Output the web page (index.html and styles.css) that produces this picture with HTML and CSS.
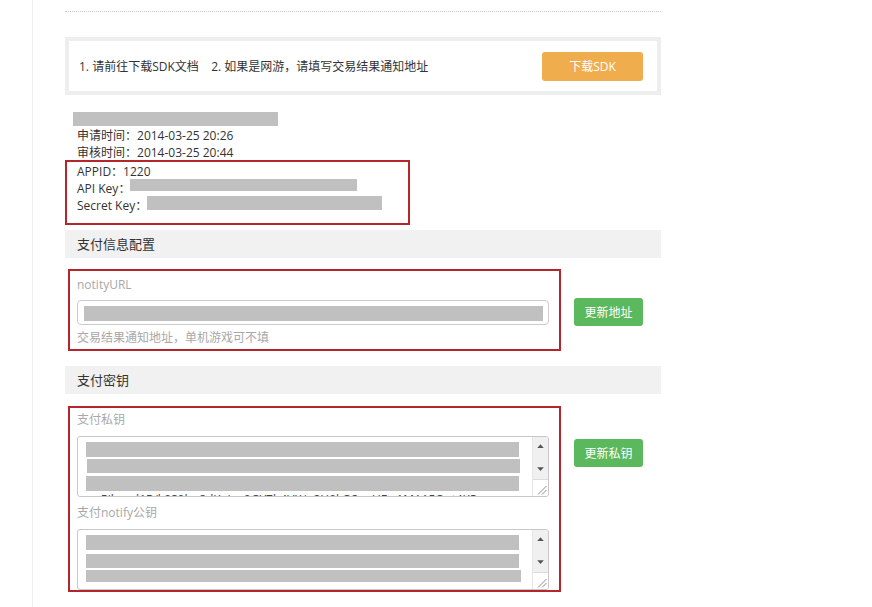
FILE: index.html
```html
<!DOCTYPE html>
<html lang="zh-CN">
<head>
<meta charset="utf-8">
<title>应用详情</title>
<link rel="stylesheet" href="styles.css">
</head>
<body>
<div class="wrap">
  <div class="main">
    <div class="rule"></div>

    <div class="sdk-box">
      <span class="sdk-text">1. 请前往下载SDK文档&nbsp;&nbsp;&nbsp;&nbsp;2. 如果是网游，请填写交易结果通知地址</span>
      <button class="btn btn-orange btn-sdk">下载SDK</button>
    </div>

    <div class="app-info">
      <div class="blur blur-title"></div>
      <div class="line">申请时间<span class="colon">：</span>2014-03-25 20:26</div>
      <div class="line">审核时间<span class="colon">：</span>2014-03-25 20:44</div>
      <div class="red-box keys-box">
        <div class="line line-in">APPID<span class="colon">：</span>1220</div>
        <div class="line line-in">API Key<span class="colon">：</span><span class="blur blur-api"></span></div>
        <div class="line line-in">Secret Key<span class="colon">：</span><span class="blur blur-secret"></span></div>
      </div>
    </div>

    <div class="section-head head-first">支付信息配置</div>

    <div class="form-row row-url">
      <div class="red-box field-box">
        <div class="field-label">notityURL</div>
        <div class="input"><div class="blur input-bar"></div></div>
        <div class="help">交易结果通知地址，单机游戏可不填</div>
      </div>
      <button class="btn btn-green btn-url">更新地址</button>
    </div>

    <div class="section-head head-second">支付密钥</div>

    <div class="form-row row-keys">
      <div class="red-box field-box pair-box">
        <div class="field-label">支付私钥</div>
        <div class="ta">
          <div class="ta-body">
            <div class="blur ta-bar"></div>
            <div class="blur ta-bar ta-bar-shift"></div>
            <div class="blur ta-bar"></div>
            <div class="ta-text">a 5Jhe+d1R/k0S0hu8dKeJx+9GY7b4VK/n2H0kQ3a+UFw1MA15Q+t4KPxz</div>
          </div>
          <div class="ta-scroll">
            <div class="track">
              <svg class="arr" width="16" height="16" viewBox="0 0 16 16"><path d="M4.5 10 L8 6 L11.5 10 Z" fill="#555"/></svg>
              <svg class="arr" width="16" height="16" viewBox="0 0 16 16"><path d="M4.5 6 L8 10 L11.5 6 Z" fill="#555"/></svg>
            </div>
            <div class="corner">
              <svg width="15" height="16" viewBox="0 0 15 16"><path d="M5 14.5 L13.5 6 M9 14.5 L13.5 10" stroke="#8a8a8a" stroke-width="1" fill="none"/></svg>
            </div>
          </div>
        </div>

        <div class="field-label label-second">支付notify公钥</div>
        <div class="ta">
          <div class="ta-body">
            <div class="blur ta-bar ta-bar-a"></div>
            <div class="blur ta-bar ta-bar-b"></div>
            <div class="blur ta-bar ta-bar-c"></div>
          </div>
          <div class="ta-scroll">
            <div class="track">
              <svg class="arr" width="16" height="16" viewBox="0 0 16 16"><path d="M4.5 10 L8 6 L11.5 10 Z" fill="#555"/></svg>
              <svg class="arr" width="16" height="16" viewBox="0 0 16 16"><path d="M4.5 6 L8 10 L11.5 6 Z" fill="#555"/></svg>
            </div>
            <div class="corner">
              <svg width="15" height="16" viewBox="0 0 15 16"><path d="M5 14.5 L13.5 6 M9 14.5 L13.5 10" stroke="#8a8a8a" stroke-width="1" fill="none"/></svg>
            </div>
          </div>
        </div>
      </div>
      <button class="btn btn-green btn-key">更新私钥</button>
    </div>
  </div>
</div>
</body>
</html>
```

FILE: styles.css
```css
* { box-sizing: border-box; }

html, body {
  margin: 0;
  padding: 0;
  background: #fff;
}

body {
  font-family: "Open Sans", "Noto Sans CJK SC", sans-serif;
  font-size: 12px;
  color: #333;
}

.wrap {
  margin-left: 32px;
  border-left: 1px solid #f0f0f0;
  min-height: 607px;
}

.main {
  margin-left: 32px;
  width: 596px;
}

.rule {
  height: 12px;
  border-bottom: 1px dotted #c8c8c8;
}

/* SDK box */
.sdk-box {
  margin-top: 25px;
  height: 58px;
  border: 4px solid #eeeeee;
  display: flex;
  align-items: center;
  justify-content: space-between;
  padding: 0 14px 0 10px;
}

.sdk-text {
  color: #333;
  font-size: 12px;
}

.btn {
  border: none;
  border-radius: 3px;
  color: #fff;
  font-family: "Open Sans", "Noto Sans CJK SC", sans-serif;
  font-size: 12px;
  padding: 0;
  cursor: pointer;
}

.btn-orange { background: #efad4e; }
.btn-green { background: #5cb85c; }

.btn-sdk {
  width: 101px;
  height: 29px;
}

/* Blurred placeholders */
.blur {
  background: #c0c0c0;
}

.app-info {
  margin-top: 17px;
}

.blur-title {
  height: 14px;
  width: 205px;
  margin-left: 8px;
}

.line {
  line-height: 17px;
  height: 17px;
  padding-left: 12px;
  white-space: nowrap;
}

.colon {
  font-family: "Noto Sans CJK TC", sans-serif;
}

.line-in {
  padding-left: 10px;
}

.blur-api,
.blur-secret {
  display: inline-block;
  vertical-align: top;
}

.blur-api {
  width: 227px;
  height: 12px;
}

.blur-secret {
  width: 235px;
  height: 14px;
}

.red-box {
  border: 2px solid #b5262c;
}

.keys-box {
  width: 345px;
  padding-bottom: 10px;
}

/* Section headers */
.section-head {
  height: 28px;
  line-height: 28px;
  background: #f1f1f1;
  padding-left: 12px;
  font-size: 13px;
  color: #333;
}

.head-first { margin-top: 5px; }
.head-second { margin-top: 15px; }

/* Form rows */
.form-row {
  display: flex;
  align-items: flex-start;
  gap: 13px;
  margin-left: 3px;
}

.row-url { margin-top: 11px; }
.row-keys { margin-top: 12px; }

.field-box {
  width: 493px;
  padding: 5px 10px 2px 7px;
}

.field-label {
  height: 18px;
  line-height: 18px;
  color: #a8a8a8;
  margin-bottom: 6px;
}

.input {
  height: 25px;
  border: 1px solid #cccccc;
  border-radius: 4px;
  padding: 5px 5px 3px 6px;
}

.input-bar {
  height: 15px;
}

.help {
  margin-top: 4px;
  height: 18px;
  line-height: 18px;
  color: #a8a8a8;
}

.btn-url {
  margin-top: 29px;
  width: 69px;
  height: 28px;
}

.btn-key {
  margin-top: 33px;
  width: 69px;
  height: 28px;
}

/* Key pair box */
.pair-box {
  padding: 3px 10px 0 7px;
}

.pair-box .field-label {
  margin-bottom: 7px;
}

.pair-box .label-second {
  margin-top: 7px;
}

.ta {
  height: 61px;
  border: 1px solid #c8c8c8;
  border-radius: 3px;
  display: flex;
  overflow: hidden;
}

.ta-body {
  flex: 1;
  overflow: hidden;
  padding: 5px 0 0 8px;
}

.ta-bar {
  width: 433px;
  height: 15px;
  margin-bottom: 2px;
}

.ta-bar-shift {
  margin-left: 1px;
  height: 14px;
  margin-bottom: 3px;
}

.ta-bar-a { height: 15px; margin-bottom: 4px; }
.ta-bar-b { height: 14px; margin-bottom: 2px; }
.ta-bar-c { height: 12px; width: 435px; }

.ta-text {
  font-size: 12px;
  line-height: 13px;
  color: #444;
  white-space: nowrap;
  padding-left: 5px;
}

.ta-scroll {
  width: 16px;
  display: flex;
  flex-direction: column;
  border-left: 1px solid #e6e6e6;
}

.track {
  flex: 1;
  background: #f0f0f0;
  display: flex;
  flex-direction: column;
  justify-content: space-between;
  padding: 1px 0 2px;
}

.arr {
  display: block;
  width: 15px;
  height: 16px;
}

.corner {
  height: 17px;
  background: #fff;
  border-top: 1px solid #dcdcdc;
}

.corner svg {
  display: block;
}
```
